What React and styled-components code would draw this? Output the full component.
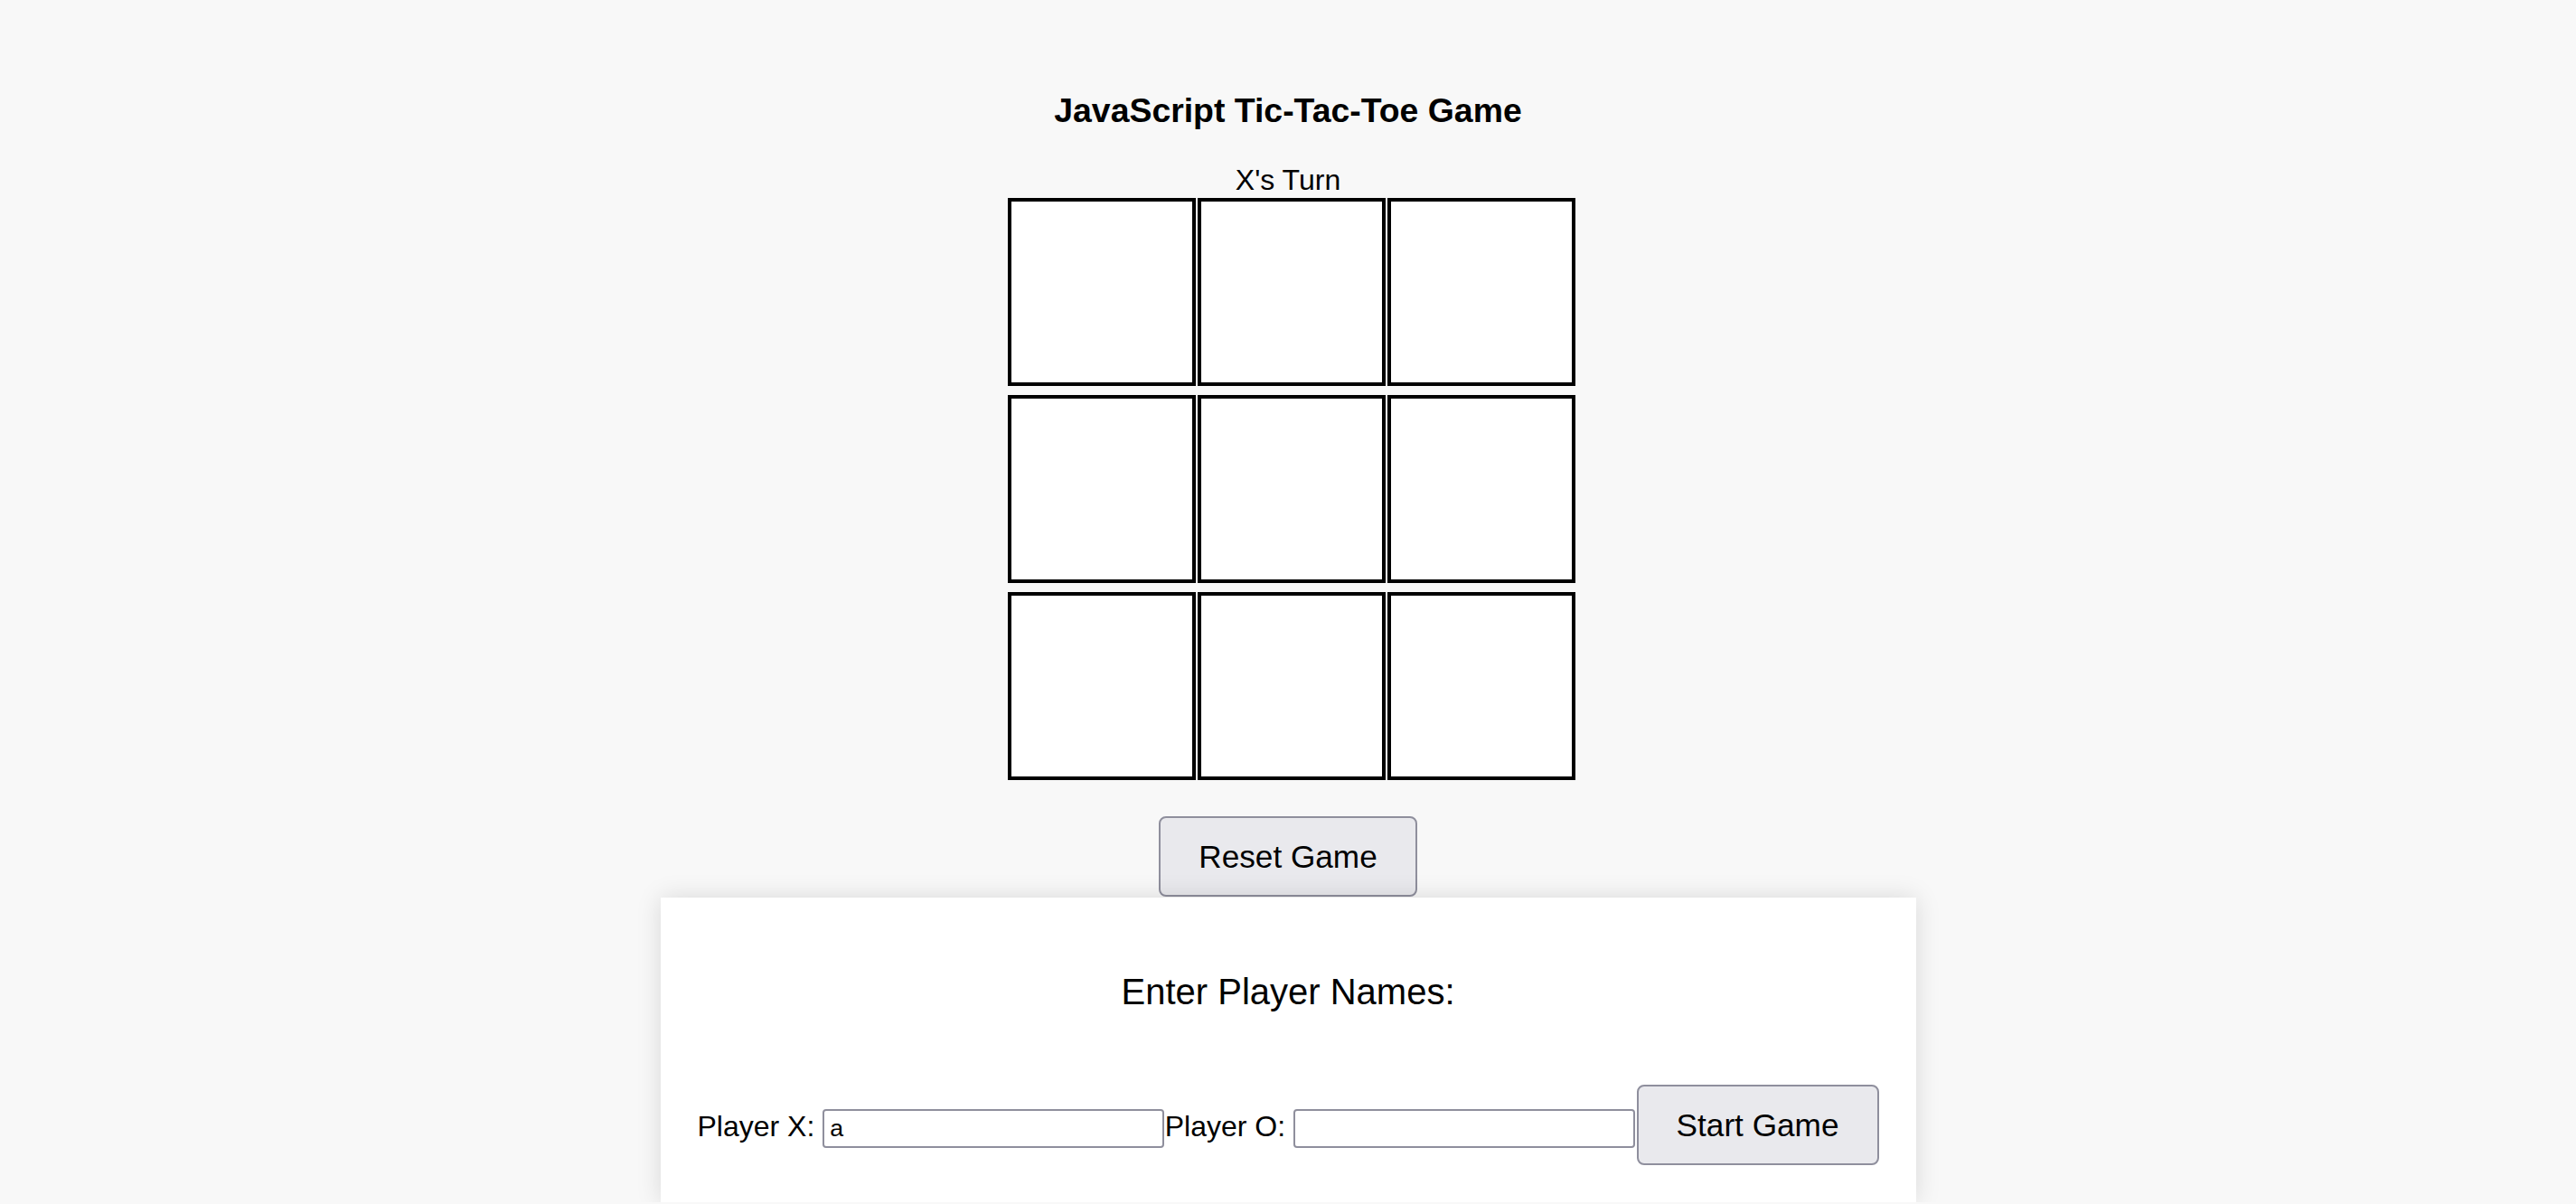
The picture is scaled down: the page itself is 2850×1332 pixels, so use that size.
import React, { useState } from "react";
import styled, { createGlobalStyle } from "styled-components";

const GlobalStyle = createGlobalStyle`
  html, body {
    margin: 0;
    padding: 0;
    overflow: hidden;
    background: #f8f8f8;
    font-family: "Liberation Sans", Arial, sans-serif;
    color: #000;
  }
  * { box-sizing: border-box; }
`;

const Page = styled.main`
  display: flex;
  flex-direction: column;
  align-items: center;
  padding-top: 101px;
`;

const Title = styled.h1`
  margin: 0 0 37px;
  font-size: 37.4px;
  font-weight: 700;
  line-height: normal;
`;

const Status = styled.div`
  font-size: 32px;
  line-height: normal;
`;

const Board = styled.div`
  display: grid;
  grid-template-columns: repeat(3, 208px);
  grid-auto-rows: 208px;
  column-gap: 2px;
  row-gap: 10px;
  margin-top: 1px;
  padding-left: 8px;
`;

const Cell = styled.button`
  width: 208px;
  height: 208px;
  background: #fff;
  border: 4px solid #000;
  border-radius: 0;
  padding: 0;
  font: 700 96px "Liberation Sans", Arial, sans-serif;
  cursor: pointer;
`;

const Button = styled.button`
  font-family: "Liberation Sans", Arial, sans-serif;
  font-size: 35.2px;
  line-height: normal;
  color: #000;
  background: #e9e9ed;
  border: 2px solid #8f8f9d;
  border-radius: 8px;
  padding: 22.5px 42px;
  margin-top: ${(p) => p.$mt || 0}px;
  margin-left: ${(p) => p.$ml || 0}px;
  cursor: pointer;
  white-space: nowrap;
`;

const Card = styled.section`
  position: relative;
  z-index: 1;
  width: 1389px;
  margin-top: 1px;
  background: #fff;
  box-shadow: 0 0 26px rgba(0, 0, 0, 0.13);
  padding: 0 41px 41px;
`;

const CardTitle = styled.h2`
  margin: 82px 0 80px;
  text-align: center;
  font-size: 40px;
  font-weight: 400;
  line-height: normal;
`;

const NameRow = styled.div`
  display: flex;
  align-items: baseline;
`;

const Label = styled.label`
  font-size: 32px;
  line-height: normal;
  margin-right: 9px;
  margin-left: ${(p) => p.$ml || 0}px;
  white-space: nowrap;
`;

const NameInput = styled.input`
  flex: 1;
  min-width: 0;
  height: 43px;
  font-family: "Liberation Sans", Arial, sans-serif;
  font-size: 26.67px;
  color: #000;
  background: #fff;
  border: 2px solid #8f8f9d;
  border-radius: 4px;
  padding: 2px 6px;
`;

export default function App() {
  const [cells] = useState(Array(9).fill(""));
  const [xName, setXName] = useState("a");
  const [oName, setOName] = useState("");

  return (
    <>
      <GlobalStyle />
      <Page>
        <Title>JavaScript Tic-Tac-Toe Game</Title>
        <Status>X's Turn</Status>
        <Board>
          {cells.map((c, i) => (
            <Cell key={i} aria-label={`cell ${i + 1}`}>
              {c}
            </Cell>
          ))}
        </Board>
        <Button $mt={40}>Reset Game</Button>
        <Card>
          <CardTitle>Enter Player Names:</CardTitle>
          <NameRow>
            <Label htmlFor="px">Player X:</Label>
            <NameInput
              id="px"
              value={xName}
              onChange={(e) => setXName(e.target.value)}
            />
            <Label htmlFor="po" $ml={1}>
              Player O:
            </Label>
            <NameInput
              id="po"
              value={oName}
              onChange={(e) => setOName(e.target.value)}
            />
            <Button $ml={2}>Start Game</Button>
          </NameRow>
        </Card>
      </Page>
    </>
  );
}
